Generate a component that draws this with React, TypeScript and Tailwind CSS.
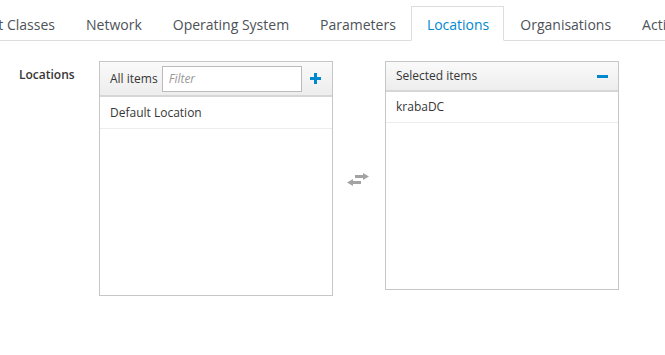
import React from "react";

const tabs = ["Network", "Operating System", "Parameters", "Locations", "Organisations", "Activity"];

const ExchangeIcon = () => (
  <svg width="22" height="13" viewBox="0 0 22 13" fill="#a3a3a3">
    <rect x="8" y="2" width="9" height="3" />
    <polygon points="16,0 22,3.5 16,7" />
    <rect x="5" y="8" width="9" height="3" />
    <polygon points="6,6 0,9.5 6,13" />
  </svg>
);

const App = () => {
  return (
    <div className="w-[665px] h-[355px] overflow-hidden bg-white font-['Open_Sans',sans-serif] text-[#363636]">
      {/* Tabs */}
      <div className="mt-[6px] flex h-[35px] border-b border-[#dddddd] whitespace-nowrap">
        <div className="-mb-px flex h-[35px] items-center pt-[2px] pr-[14px] text-[14px] text-[#4d5258] border border-transparent border-l-0">
          <div className="w-[55px] overflow-hidden flex justify-end">
            <span>Puppet Classes</span>
          </div>
        </div>
        {tabs.map((t) => {
          const active = t === "Locations";
          return (
            <div
              key={t}
              className={
                active
                  ? "-mb-px flex h-[35px] items-center pt-[2px] pl-[15px] pr-[14px] text-[14px] text-[#0088ce] bg-white border border-[#dddddd] border-b-white"
                  : "-mb-px flex h-[35px] items-center pt-[2px] pl-[15px] pr-[14px] text-[14px] text-[#4d5258] border border-transparent"
              }
            >
              {t}
            </div>
          );
        })}
      </div>

      {/* Form row */}
      <div className="flex items-start pt-[20px] pl-[19px]">
        <div className="w-[80px] pt-[5px] text-[12px] font-semibold text-[#363636]">Locations</div>

        <div className="flex items-center">
          {/* All items */}
          <div className="w-[234px] border border-[#c6c6c6] bg-white">
            <div className="flex h-[35px] items-center border-b-2 border-[#d6d6d6] bg-gradient-to-b from-[#fafafa] to-[#ededed] pl-[10px] pr-[11px]">
              <span className="text-[12px]">All items</span>
              <input
                placeholder="Filter"
                className="ml-[4px] h-[26px] w-[140px] border border-[#bbbbbb] bg-white px-[6px] text-[12px] italic placeholder:text-[#999999] outline-none"
              />
              <div className="ml-auto flex items-center">
                <svg width="11" height="11" viewBox="0 0 11 11" fill="#0088ce">
                  <rect x="4" y="0" width="3" height="11" />
                  <rect x="0" y="4" width="11" height="3" />
                </svg>
              </div>
            </div>
            <div className="h-[198px]">
              <div className="flex h-[32px] items-center border-b border-[#ededed] px-[10px] text-[12px]">Default Location</div>
            </div>
          </div>

          <div className="flex w-[52px] justify-center pt-[2px] pr-[2px]">
            <ExchangeIcon />
          </div>

          {/* Selected items */}
          <div className="w-[234px] self-start border border-[#c6c6c6] bg-white">
            <div className="flex h-[30px] items-center justify-between border-b-2 border-[#d6d6d6] bg-gradient-to-b from-[#fafafa] to-[#ededed] pl-[10px] pr-[10px]">
              <span className="text-[12px]">Selected items</span>
              <svg width="11" height="3" viewBox="0 0 11 3" fill="#0088ce">
                <rect x="0" y="0" width="11" height="3" />
              </svg>
            </div>
            <div className="h-[197px]">
              <div className="flex h-[31px] items-center border-b border-[#ededed] px-[10px] text-[12px]">krabaDC</div>
            </div>
          </div>
        </div>
      </div>
    </div>
  );
};

export default App;
